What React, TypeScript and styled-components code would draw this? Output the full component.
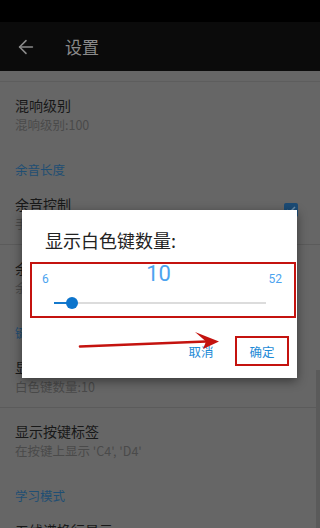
import styled, { createGlobalStyle } from "styled-components";
import { ArrowLeft } from "lucide-react";

const GlobalStyle = createGlobalStyle`
  html, body {
    margin: 0;
    padding: 0;
    background: #666666;
  }
  body {
    font-family: Roboto, "Noto Sans CJK SC", sans-serif;
  }
  * {
    box-sizing: border-box;
  }
`;

const cjk = `"Noto Sans CJK SC", Roboto, sans-serif`;

// screen
const Screen = styled.div`
  position: relative;
  width: 320px;
  height: 528px;
  overflow: hidden;
  background: #666666;
  font-family: ${cjk};
`;

const StatusBar = styled.div`
  height: 22px;
  background: #000;
`;

const Toolbar = styled.div`
  height: 49px;
  background: #0b0b0b;
  display: flex;
  align-items: center;
  padding-left: 15px;
  gap: 28px;
  color: #8a8a8a;
`;

const ToolbarTitle = styled.div`
  font-size: 17px;
  line-height: 24px;
  color: #8a8a8a;
`;

// preference list
const List = styled.div`
  margin-top: 10px;
  border-top: 1px solid #5d5d5d;
  display: flex;
  flex-direction: column;
`;

const Row = styled.div<{ divider?: boolean }>`
  position: relative;
  padding: 12px 15px;
  height: 64px;
  border-bottom: ${({ divider }) => (divider ? "1px solid #5b5b5b" : "none")};
`;

const RowTitle = styled.div`
  font-size: 14px;
  line-height: 22px;
  color: #181818;
`;

const RowSummary = styled.div`
  font-size: 12.5px;
  line-height: 18px;
  color: #4a4a4a;
`;

const Category = styled.div`
  padding: 15px 15px 2px;
  font-size: 12.5px;
  line-height: 18px;
  color: #1f4e73;
`;

const CheckBox = styled.div`
  position: absolute;
  right: 22px;
  top: 22px;
  width: 14px;
  height: 14px;
  border-radius: 2px;
  background: #1b4b75;
  display: flex;
  align-items: center;
  justify-content: center;
`;

const ScrollThumb = styled.div`
  position: absolute;
  right: 0;
  top: 370px;
  width: 4px;
  height: 158px;
  background: #5a5a5a;
`;

// dialog
const Dialog = styled.div`
  position: absolute;
  left: 22px;
  top: 210px;
  width: 275px;
  height: 168px;
  background: #fff;
  box-shadow: 0 3px 10px rgba(0, 0, 0, 0.45);
  display: flex;
  flex-direction: column;
`;

const DialogTitle = styled.div`
  height: 52px;
  padding: 18px 0 0 23px;
  font-size: 18px;
  line-height: 24px;
  color: #222;
`;

const RangePanel = styled.div`
  margin: 0 1px 0 8px;
  height: 56px;
  border: 2.5px solid #c4130f;
  padding: 0 12px 0 10px;
  position: relative;
`;

const RangeLabels = styled.div`
  display: flex;
  justify-content: space-between;
  align-items: flex-start;
  color: #4ca3ef;
`;

const Bound = styled.span`
  margin-top: 7px;
  font-size: 12px;
  line-height: 16px;
  font-family: Roboto, sans-serif;
`;

const Current = styled.span`
  margin-top: -1px;
  font-size: 22px;
  line-height: 22px;
  font-family: Roboto, sans-serif;
`;

const Track = styled.div`
  position: relative;
  margin: 15px 16px 0 12px;
  height: 2px;
  background: #dcdcdc;
`;

const TrackFill = styled.div`
  position: absolute;
  left: 0;
  top: 0;
  height: 2px;
  background: #1479cc;
`;

const Thumb = styled.div`
  position: absolute;
  top: -5px;
  width: 12px;
  height: 12px;
  margin-left: -6px;
  border-radius: 50%;
  background: #0c74cc;
`;

const Actions = styled.div`
  display: flex;
  justify-content: flex-end;
  align-items: center;
  padding: 18px 8px 0 0;
  gap: 12px;
`;

const ActionButton = styled.div<{ highlighted?: boolean }>`
  width: ${({ highlighted }) => (highlighted ? "54px" : "44px")};
  height: 30px;
  display: flex;
  align-items: center;
  justify-content: center;
  font-size: 12.5px;
  color: #1d8ad6;
  border: ${({ highlighted }) =>
    highlighted ? "2.5px solid #c4130f" : "2.5px solid transparent"};
`;

const Pointer = styled.svg`
  position: absolute;
  left: 0;
  top: 0;
  pointer-events: none;
`;

const min = 6;
const max = 52;
const value = 10;

export default function App() {
  const pct = ((value - min) / (max - min)) * 100;
  return (
    <>
      <GlobalStyle />
      <Screen>
        <StatusBar />
        <Toolbar>
          <ArrowLeft size={22} strokeWidth={1.7} />
          <ToolbarTitle>设置</ToolbarTitle>
        </Toolbar>

        <List>
          <Row>
            <RowTitle>混响级别</RowTitle>
            <RowSummary>混响级别:100</RowSummary>
          </Row>
          <Category>余音长度</Category>
          <Row divider>
            <RowTitle>余音控制</RowTitle>
            <RowSummary>手动控制余音长度</RowSummary>
            <CheckBox>
              <svg width="12" height="12" viewBox="0 0 24 24">
                <path
                  d="M4 12l5 5L20 6"
                  fill="none"
                  stroke="#6a8ca8"
                  strokeWidth="3"
                />
              </svg>
            </CheckBox>
          </Row>
          <Row>
            <RowTitle>余音长度</RowTitle>
            <RowSummary>余音长度:100</RowSummary>
          </Row>
          <Category>键盘</Category>
          <Row divider>
            <RowTitle>显示白色键数量</RowTitle>
            <RowSummary>白色键数量:10</RowSummary>
          </Row>
          <Row>
            <RowTitle>显示按键标签</RowTitle>
            <RowSummary>在按键上显示 'C4', 'D4'</RowSummary>
          </Row>
          <Category>学习模式</Category>
          <Row>
            <RowTitle>五线谱换行显示</RowTitle>
          </Row>
        </List>

        <ScrollThumb />

        <Dialog>
          <DialogTitle>显示白色键数量:</DialogTitle>
          <RangePanel>
            <RangeLabels>
              <Bound>{min}</Bound>
              <Current>{value}</Current>
              <Bound>{max}</Bound>
            </RangeLabels>
            <Track>
              <TrackFill style={{ width: `${pct}%` }} />
              <Thumb style={{ left: `${pct}%` }} />
            </Track>
          </RangePanel>
          <Actions>
            <ActionButton>取消</ActionButton>
            <ActionButton highlighted>确定</ActionButton>
          </Actions>
        </Dialog>

        <Pointer width="320" height="528" viewBox="0 0 320 528">
          <path
            d="M80 346.5 L206 341.5"
            stroke="#c4130f"
            strokeWidth="2.6"
            strokeLinecap="round"
          />
          <path d="M195 332 L219 341.5 L203 349 L206 341.5 Z" fill="#c4130f" />
        </Pointer>
      </Screen>
    </>
  );
}
